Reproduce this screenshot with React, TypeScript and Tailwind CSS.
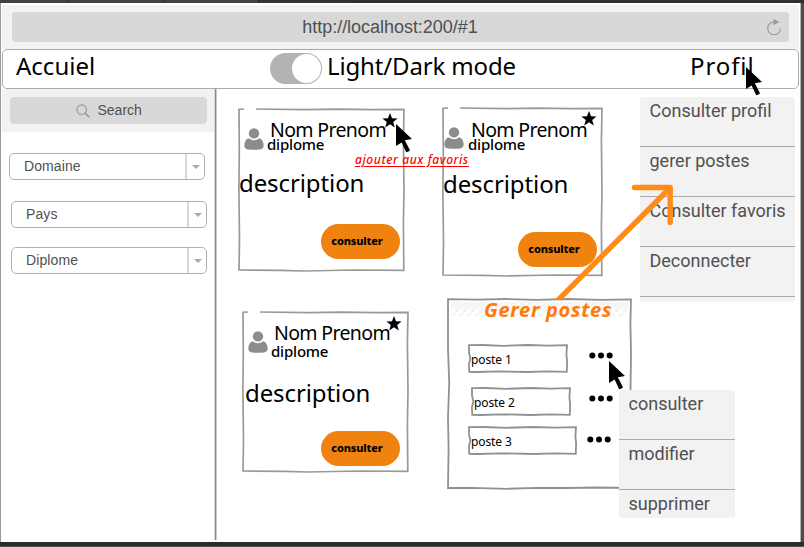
import React from "react";

const hand = "font-['Noto_Sans',sans-serif] text-black whitespace-nowrap";

function Cursor({ className }: { className: string }) {
  return (
    <svg className={className} width="17" height="30" viewBox="0 0 17 30">
      <path d="M0 0L16 15L8.8 16.2L14 26.3Q13 28 10.2 28.2L5.6 18.6L0 22Z" fill="#000" />
    </svg>
  );
}

function Person({ className }: { className: string }) {
  return (
    <svg className={className} width="20" height="22" viewBox="0 0 20 22">
      <circle cx="10" cy="5.4" r="5.2" fill="#8c8c8c" />
      <path d="M4.6 10.2Q10 14.4 15.4 10.2C18.2 11 19.7 14 19.7 18Q19.4 21 16 21.4Q10 22.2 4 21.4Q.6 21 .3 18C.3 14 1.8 11 4.6 10.2Z" fill="#8c8c8c" />
    </svg>
  );
}

function Star({ className }: { className: string }) {
  return (
    <svg className={className} width="16" height="15" viewBox="0 0 16 15">
      <path d="M8 0L10 5.3L15.6 5.4L11.2 8.9L12.8 14.5L8 11.3L3.2 14.5L4.8 8.9L.4 5.4L6 5.3Z" fill="#000" />
    </svg>
  );
}

function CardFrame({ w, h }: { w: number; h: number }) {
  return (
    <svg className="absolute inset-0" width={w} height={h} viewBox={`0 0 ${w} ${h}`} fill="none" stroke="#999" strokeWidth="1.7">
      <path d={`M6 1L1 1.2L1.3 ${h * 0.25}L.9 ${h * 0.5}L1.5 ${h * 0.8}L1 ${h - 2}L${w * 0.25} ${h - 1.6}L${w * 0.4} ${h - 1}L${w * 0.7} ${h - 2}L${w - 1.2} ${h - 1.6}L${w - 1.6} ${h * 0.7}L${w - 1} ${h * 0.5}L${w - 1.6} ${h * 0.2}L${w - 1} 1.4L${w * 0.8} 1.6L${w * 0.6} 1.2L${w * 0.4} 1.6L18 1`} />
    </svg>
  );
}

interface CardProps {
  w: number;
  h: number;
  box: string;
  icon: string;
  names: string;
  diploma: string;
  desc: string;
  button: string;
  star: string;
}

function Card(p: CardProps) {
  return (
    <div className={`relative flex flex-col ${p.box}`}>
      <CardFrame w={p.w} h={p.h} />
      <div className="flex items-start">
        <Person className={`shrink-0 ${p.icon}`} />
        <div className={p.names}>
          <div className={`${hand} ml-[3px] text-[19.5px] leading-[17px] tracking-[-0.65px]`}>Nom Prenom</div>
          <div className={`${hand} text-[15px] leading-[12px] font-medium tracking-[-0.2px] ${p.diploma}`}>diplome</div>
        </div>
      </div>
      <div className={`${hand} text-[24px] leading-[24px] tracking-[-0.1px] ${p.desc}`}>description</div>
      <button className={`${hand} h-[35px] w-[79px] rounded-full bg-[#f0820f] pr-[7px] pb-[3px] text-[11px] leading-[11px] font-extrabold tracking-[-0.15px] ${p.button}`}>
        consulter
      </button>
      <Star className={`absolute ${p.star}`} />
    </div>
  );
}

function Select({ label, className }: { label: string; className: string }) {
  return (
    <div className={`flex h-[27px] w-[196px] rounded-[5px] border border-[#b0b0b0] bg-white ${className}`}>
      <div className="flex-1 border-r-2 border-[#d6d6d6] pl-[14px] font-['Liberation_Sans',sans-serif] text-[14px] leading-[25px] tracking-[0.1px] text-[#505050]">{label}</div>
      <div className="flex w-[17px] items-center justify-center">
        <svg width="8" height="4" viewBox="0 0 8 4"><path d="M0 0H8L4 4Z" fill="#aaa" /></svg>
      </div>
    </div>
  );
}

const menuText = "font-['Roboto',sans-serif] text-[18px] leading-[28px] text-[#505050] whitespace-nowrap pl-[10px]";

function Row({ label, input, text, dots, w, h }: { label: string; input: string; text: string; dots: string; w: number; h: number }) {
  return (
    <div className={`flex items-start ${input}`}>
      <div className={`relative flex items-center ${text}`}>
        <svg className="absolute inset-0" width={w} height={h} viewBox={`0 0 ${w} ${h}`} fill="none" stroke="#919191" strokeWidth="1.8">
          <path d={`M1 1.2L${w * 0.15} 1L${w * 0.35} 1.8L${w * 0.6} 1L${w * 0.8} 1.6L${w - 1} 1.2L${w - 1.6} ${h * 0.35}L${w - 0.9} ${h * 0.6}L${w - 1.2} ${h - 1.2}L${w * 0.8} ${h - 1.6}L${w * 0.6} ${h - 1}L${w * 0.3} ${h - 1.7}L${w * 0.1} ${h - 1}L1.3 ${h - 1.2}L.9 ${h * 0.7}L2.4 ${h * 0.5}L1 ${h * 0.3}Z`} />
        </svg>
        <span className={`${hand} relative mt-[2px] pl-[3px] text-[12px] leading-[12px] tracking-[-0.1px]`}>{label}</span>
      </div>
      <svg className={dots} width="24" height="7" viewBox="0 0 24 7">
        <circle cx="3.3" cy="3.5" r="3" /><circle cx="12" cy="3.5" r="3" /><circle cx="20.7" cy="3.5" r="3" />
      </svg>
    </div>
  );
}

export default function App() {
  return (
    <div className="relative flex h-[547px] w-[804px] flex-col overflow-hidden bg-white">
      <div className="flex h-[3px] shrink-0 bg-[#302f30]">
        <div className="w-[69px] border-r border-[#2a2a2a] bg-[#424142]" />
        <div className="w-[95px] border-r border-[#2a2a2a] bg-[#424142]" />
        <div className="w-[95px] border-r border-[#2a2a2a] bg-[#424142]" />
        <div className="w-[95px] bg-[#343334]" />
      </div>
      <div className="flex h-[539px] shrink-0">
        <div className="w-px bg-[#999]" />
        <div className="flex w-[799px] flex-col">
          <div className="mt-[2px] mr-[1px] ml-[1px] flex h-[44px] shrink-0 bg-[#f2f2f2] pt-[7px] pl-[9.5px]">
            <div className="relative flex h-[30px] w-[777px] items-center justify-center rounded-[4px] bg-[#d8d8d8]">
              <span className="mr-[20px] font-['Liberation_Sans',sans-serif] text-[18px] leading-[30px] tracking-[-0.03px] text-[#505050]">http://localhost:200/#1</span>
              <svg className="absolute top-[7px] right-[7px]" width="16" height="17" viewBox="0 0 16 17" fill="none" stroke="#999" strokeWidth="1.1">
                <path d="M8 3A6.4 6.4 0 1 0 14.5 9.5" />
                <path d="M7.5 0L13.5 3L7.5 6Z" fill="#999" stroke="none" />
              </svg>
            </div>
          </div>
          <div className="ml-px flex h-[40px] w-[797px] shrink-0 items-start rounded-[5px] border border-[#aaa] bg-white">
            <span className={`${hand} mt-[4px] ml-[13px] w-[254px] text-[24px] leading-[24px]`}>Accuiel</span>
            <div className="mt-[3px] flex h-[31px] w-[52px] justify-end rounded-full bg-[#b3b3b3] p-px">
              <div className="size-[29px] rounded-full bg-white" />
            </div>
            <span className={`${hand} mt-[4px] ml-[5px] w-[363px] text-[24px] leading-[24px] tracking-[-0.15px]`}>Light/Dark mode</span>
            <span className={`${hand} mt-[4px] text-[24px] leading-[24px] tracking-[0.9px]`}>Profil</span>
          </div>
          <div className="flex h-[453px]">
            <aside className="flex w-[213px] shrink-0 flex-col">
              <div className="ml-px h-[43px] shrink-0 bg-[#f2f2f2] pt-[8px] pl-[7.5px]">
                <div className="flex h-[27px] w-[197px] items-center rounded-[4px] bg-[#d8d8d8] pl-[66px]">
                  <svg className="mt-px" width="14" height="14" viewBox="0 0 14 14" fill="none" stroke="#999" strokeWidth="1.2">
                    <circle cx="5.7" cy="5.7" r="4.8" /><path d="M9.2 9.2L13.3 13.3" strokeWidth="1.6" />
                  </svg>
                  <span className="ml-[8px] font-['Liberation_Sans',sans-serif] text-[14px] leading-[27px] text-[#505050]">Search</span>
                </div>
              </div>
              <Select label="Domaine" className="mt-[21px] ml-[8px]" />
              <Select label="Pays" className="mt-[21px] ml-[10px]" />
              <Select label="Diplome" className="mt-[19px] ml-[10px]" />
            </aside>
            <div className="h-[451px] w-[3px] shrink-0 border-x border-l-[#ddd] border-r-[#ccc] bg-[#888]" />
            <main className="flex">
              <div className="flex w-[221px] shrink-0 flex-col pl-[21px]">
                <Card w={167} h={164} box="mt-[19px] h-[164px] w-[167px]" icon="mt-[20px] ml-[6px]" names="mt-[13px] ml-[3px]" diploma="mt-0" desc="mt-[21px] ml-px" button="mt-[29px] ml-[83px]" star="top-[5px] left-[144px]" />
                <Card w={167} h={162} box="mt-[39px] ml-[4px] h-[162px] w-[167px]" icon="mt-[20px] ml-[6px]" names="mt-[13px] ml-[3px]" diploma="mt-[4px]" desc="mt-[24px] ml-[3px]" button="mt-[26px] ml-[79px]" star="top-[5px] left-[144px]" />
              </div>
              <div className="flex w-[201px] shrink-0 flex-col pl-[4px]">
                <Card w={161} h={170} box="mt-[18px] h-[170px] w-[161px]" icon="mt-[20px] ml-[2px]" names="mt-[14px] ml-[4px]" diploma="mt-0" desc="mt-[22px] ml-px" button="mt-[36px] ml-[76px]" star="top-[4px] left-[139px]" />
                <section className="relative mt-[21px] ml-[5px] flex h-[192px] w-[185px] flex-col">
                  <svg className="absolute inset-0" width="185" height="192" viewBox="0 0 185 192" fill="none">
                    <defs>
                      <pattern id="hatch" width="8" height="14" patternUnits="userSpaceOnUse"><path d="M-8 14L8 1M0 14L16 1M-4 14L12 1" stroke="#ebebeb" strokeWidth="1.2" /></pattern>
                    </defs>
                    <path d="M4 4H181V17L170 19L5 18Z" fill="url(#hatch)" />
                    <path d="M1 1.2L30 1.6L60 1L90 1.8L120 1L155 1.8L184 1.4L183.4 25L184 55L183.4 100L184 150L183.4 190L150 189.5L120 190L90 189.8L60 190.8L25 189.8L1 190L1.6 150L1 120L2.2 85L1 50Z" stroke="#919191" strokeWidth="1.8" />
                  </svg>
                  <h2 className="relative mt-[2px] ml-[37px] font-['Noto_Sans',sans-serif] text-[20px] leading-[20px] font-bold tracking-[0.7px] whitespace-nowrap text-[#ff7a0a] italic">Gerer postes</h2>
                  <Row label="poste 1" w={100} h={29} input="mt-[24px] ml-[21px]" text="h-[29px] w-[100px]" dots="mt-[8px] ml-[21px]" />
                  <Row label="poste 2" w={100} h={29} input="mt-[14px] ml-[24px]" text="h-[29px] w-[100px]" dots="mt-[8px] ml-[18px]" />
                  <Row label="poste 3" w={109} h={29} input="mt-[10px] ml-[21px]" text="h-[29px] w-[109px]" dots="mt-[10px] ml-[10px]" />
                </section>
              </div>
              <nav className="mt-[8px] ml-[0.5px] h-[205px] w-[155px] shrink-0 rounded-[3px] bg-[#f2f2f2]">
                <div className={`${menuText} h-[50px] border-b border-[#aaa]`}>Consulter profil</div>
                <div className={`${menuText} h-[50px] border-b border-[#aaa]`}>gerer postes</div>
                <div className={`${menuText} h-[50px] border-b border-[#aaa]`}>Consulter favoris</div>
                <div className={`${menuText} h-[50px] border-b border-[#aaa]`}>Deconnecter</div>
              </nav>
            </main>
          </div>
        </div>
        <div className="w-px bg-[#b5b5b5]" />
        <div className="w-[3px] bg-[#4b4b50]" />
      </div>
      <div className="h-[5px] shrink-0 border-b border-[#505050] bg-[#2b2a2b]" />

      <svg className="absolute top-[180px] left-[550px]" width="130" height="119" viewBox="0 0 130 119" fill="none" stroke="#ff8c1a" strokeWidth="5.4">
        <path d="M6 122L119 9" /><path d="M84.5 7.5H120.2V42.5" strokeLinecap="round" strokeLinejoin="round" />
      </svg>
      <span className="absolute top-[152px] left-[355px] font-['Noto_Sans',sans-serif] text-[12px] leading-[16px] font-medium tracking-[0.6px] whitespace-nowrap text-[#f00] italic underline underline-offset-2">ajouter aux favoris</span>
      <Cursor className="absolute top-[124px] left-[396px]" />
      <Cursor className="absolute top-[67px] left-[746px]" />
      <Cursor className="absolute top-[361px] left-[609px]" />
      <div className="absolute top-[390px] left-[618.5px] h-[128px] w-[116px] rounded-[3px] bg-[#f2f2f2]">
        <div className={`${menuText} h-[50px] border-b border-[#aaa]`}>consulter</div>
        <div className={`${menuText} h-[50px] border-b border-[#aaa]`}>modifier</div>
        <div className={`${menuText} h-[28px]`}>supprimer</div>
      </div>
    </div>
  );
}
